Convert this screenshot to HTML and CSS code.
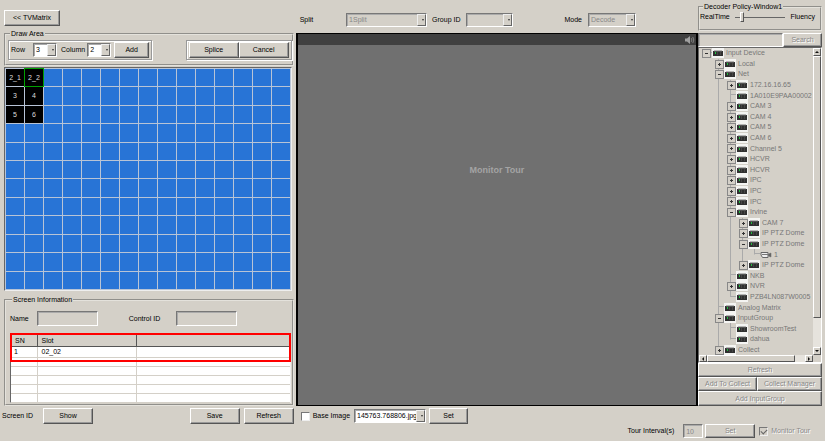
FILE: index.html
```html
<!DOCTYPE html>
<html lang="en">
<head>
  <meta charset="UTF-8" />
  <meta name="viewport" content="width=device-width, initial-scale=1.0" />
  <title>TVMatrix</title>
  <link rel="stylesheet" href="styles.css">
</head>
<body>
  <div class="app">
    <div class="left">
      <button class="btn back">&lt;&lt; TVMatrix</button>

      <fieldset class="group draw-area">
        <legend>Draw Area</legend>
        <div class="draw-row">
          <div class="box">
            <label for="row">Row</label>
            <span class="select small"><select id="row"><option>3</option></select></span>
            <label for="column">Column</label>
            <span class="select small column"><select id="column"><option>2</option></select></span>
            <button class="btn add">Add</button>
          </div>
          <div class="box">
            <button class="btn">Splice</button>
            <button class="btn">Cancel</button>
          </div>
        </div>
      </fieldset>

      <div class="matrix" id="matrix"></div>

      <fieldset class="group screen-info">
        <legend>Screen Information</legend>
        <div class="fields">
          <label for="name">Name</label>
          <input type="text" id="name" disabled />
          <label for="control">Control ID</label>
          <input type="text" id="control" class="control" disabled />
        </div>
        <div class="slots">
          <table>
            <thead>
              <tr><th class="sn">SN</th><th class="slot">Slot</th><th></th></tr>
            </thead>
            <tbody>
              <tr class="first"><td>1</td><td>02_02</td><td></td></tr>
              <tr><td></td><td></td><td></td></tr>
              <tr><td></td><td></td><td></td></tr>
              <tr><td></td><td></td><td></td></tr>
              <tr><td></td><td></td><td></td></tr>
              <tr><td></td><td></td><td></td></tr>
            </tbody>
          </table>
          <div class="highlight"></div>
        </div>
      </fieldset>

      <div class="screen-actions">
        <span class="screen-id">Screen ID</span>
        <button class="btn">Show</button>
        <button class="btn save">Save</button>
        <button class="btn">Refresh</button>
      </div>
    </div>

    <div class="right">
      <div class="panels">
        <div class="center">
          <div class="options">
            <label for="split">Split</label>
            <span class="select split"><select id="split" disabled><option>1Split</option></select></span>
            <label for="group">Group ID</label>
            <span class="select group-id"><select id="group" disabled><option></option></select></span>
            <label for="mode" class="mode-label">Mode</label>
            <span class="select mode"><select id="mode" disabled><option>Decode</option></select></span>
          </div>
          <div class="video">
            <div class="video-bar">
              <svg width="10" height="8" viewBox="0 0 10 8">
                <path d="M0 2.5h2L5 0v8L2 5.5H0z" fill="#a0a0a0" />
                <path d="M6.3 2.2q1.2 1.8 0 3.6M7.8 1q2 3 0 6" fill="none" stroke="#909090" stroke-width=".8" />
              </svg>
            </div>
            <div class="tour">Monitor Tour</div>
          </div>
        </div>

        <div class="side">
          <fieldset class="group policy">
            <legend>Decoder Policy-Window1</legend>
            <div class="slider">
              <label for="policy">RealTime</label>
              <input type="range" id="policy" min="0" max="10" value="1" />
              <span>Fluency</span>
            </div>
          </fieldset>
          <div class="search">
            <input type="text" aria-label="Search" disabled />
            <button class="btn" disabled>Search</button>
          </div>
          <div class="tree-box">
            <ul class="tree" id="tree"></ul>
            <div class="scroll vertical">
              <button class="arrow up" aria-label="Up"></button>
              <div class="thumb"></div>
              <div class="track"></div>
              <button class="arrow down" aria-label="Down"></button>
            </div>
            <div class="scroll horizontal">
              <button class="arrow prev" aria-label="Left"></button>
              <div class="thumb"></div>
              <div class="track"></div>
              <button class="arrow next" aria-label="Right"></button>
            </div>
          </div>
          <div class="side-actions">
            <button class="btn wide" disabled>Refresh</button>
            <button class="btn" disabled>Add To Collect</button>
            <button class="btn" disabled>Collect Manager</button>
            <button class="btn wide" disabled>Add InputGroup</button>
          </div>
        </div>
      </div>

      <div class="base-image">
        <input type="checkbox" id="base" />
        <label for="base">Base Image</label>
        <span class="select file"><select aria-label="Image file"><option>145763.768806.jpg</option></select></span>
        <button class="btn">Set</button>
      </div>
      <div class="interval">
        <label for="interval">Tour Interval(s)</label>
        <input type="text" id="interval" value="10" disabled />
        <button class="btn" disabled>Set</button>
        <input type="checkbox" id="monitor" checked disabled />
        <label for="monitor" class="off">Monitor Tour</label>
      </div>
    </div>
  </div>

  <script>
    // screens already placed on the 15 x 12 matrix
    const screens = { 0: "2_1", 1: "2_2", 15: "3", 16: "4", 30: "5", 31: "6" };
    const matrix = document.getElementById("matrix");

    for (let i = 0; i < 180; i++) {
      const cell = document.createElement("div");
      cell.className = "cell";
      if (screens[i]) {
        cell.classList.add("used");
        cell.textContent = screens[i];
      }
      if (i === 1) cell.classList.add("selected");
      matrix.appendChild(cell);
    }

    // level, node type, label
    const nodes = [
      [0, "minus root", "Input Device"],
      [1, "plus", "Local"],
      [1, "minus", "Net"],
      [2, "plus", "172.16.16.65"],
      [2, "leaf", "1A010E9PAA00002"],
      [2, "plus", "CAM 3"],
      [2, "plus", "CAM 4"],
      [2, "plus", "CAM 5"],
      [2, "plus", "CAM 6"],
      [2, "plus", "Channel 5"],
      [2, "plus", "HCVR"],
      [2, "plus", "HCVR"],
      [2, "plus", "IPC"],
      [2, "plus", "IPC"],
      [2, "plus", "IPC"],
      [2, "minus", "Irvine"],
      [3, "plus", "CAM 7"],
      [3, "plus", "IP PTZ Dome"],
      [3, "minus", "IP PTZ Dome"],
      [4, "leaf last", "1"],
      [3, "plus last", "IP PTZ Dome"],
      [2, "leaf", "NKB"],
      [2, "plus", "NVR"],
      [2, "leaf last", "PZB4LN087W0005"],
      [1, "leaf", "Analog Matrix"],
      [1, "minus", "InputGroup"],
      [2, "leaf", "ShowroomTest"],
      [2, "leaf last", "dahua"],
      [1, "plus", "Collect"]
    ];

    const device = '<svg class="icon" width="12" height="10" viewBox="0 0 12 10">' +
      '<rect width="12" height="10" fill="#f4f4f2"/><rect x="1" y="3" width="10" height="5" fill="#303030"/>' +
      '<path d="M2 3h8" stroke="#777"/><path d="M5.5 4v3M8.5 4v3" stroke="#555" stroke-width=".6"/>' +
      '<rect x="3" y="4" width="1" height="2" fill="#20c040"/></svg>';
    const camera = '<svg class="icon" width="12" height="10" viewBox="0 0 12 10">' +
      '<path d="M1 2.5h7v5H2.5L1 5z" fill="#eee" stroke="#666"/><path d="M2 4.5h6" stroke="#777"/>' +
      '<path d="M8.5 4l2.5-1v4L8.5 6z" fill="#666" stroke="#666" stroke-width=".5"/></svg>';

    document.getElementById("tree").innerHTML = nodes.map(([level, type, label]) => {
      let guides = "";
      for (let i = 0; i < level; i++) {
        guides += `<span class="guide ${i ? "line" : ""}"></span>`;
      }
      return `<li>${guides}<span class="guide line node ${type}"></span>` +
        `${level === 4 ? camera : device}<span class="text">${label}</span></li>`;
    }).join("");
  </script>
</body>
</html>
```
FILE: styles.css
```css
* {
  box-sizing: border-box;
}

body {
  margin: 0;
  background: #d4d0c8;
  color: #000;
  font-family: "Liberation Sans", Arial, sans-serif;
  font-size: 7px;
  line-height: 10px;
}

button,
input,
select {
  font: inherit;
  color: inherit;
  margin: 0;
  padding: 0;
  border-radius: 0;
}

label,
span,
legend {
  white-space: nowrap;
}

.app {
  display: flex;
  height: 100vh;
  min-height: 441px;
}

/* shared controls */

.btn {
  height: 16px;
  width: 50px;
  background: #d4d0c8;
  border: 1px solid;
  border-color: #fff #555 #555 #fff;
  box-shadow: inset -1px -1px #999;
  white-space: nowrap;
}

.btn:disabled,
.off {
  color: #888;
  text-shadow: 1px 1px #fff;
}

input[type="text"],
.select select {
  appearance: none;
  background: #fff;
  border: 1px solid;
  border-color: #777 #fff #fff #777;
  box-shadow: inset 1px 1px #aaa;
  outline: none;
}

input[type="text"]:disabled,
.select select:disabled {
  background: #d4d0c8;
  color: #888;
  opacity: 1;
}

.select {
  position: relative;
  display: flex;
  height: 14px;
}

.select select {
  width: 100%;
  padding-left: 2px;
}

.select::before {
  content: "";
  position: absolute;
  right: 1px;
  top: 1px;
  bottom: 1px;
  width: 7px;
  background: #d4d0c8;
  border: 1px solid;
  border-color: #eee #666 #666 #eee;
  pointer-events: none;
}

.select::after {
  content: "";
  position: absolute;
  right: 3px;
  top: 6px;
  border: 1px solid transparent;
  border-top: 2px solid #333;
  pointer-events: none;
}

input[type="checkbox"] {
  appearance: none;
  width: 9px;
  height: 9px;
  background: #fff;
  border: 1px solid;
  border-color: #777 #eee #eee #777;
}

input[type="checkbox"]:disabled {
  background: #d4d0c8;
}

input[type="checkbox"]:checked::after {
  content: "";
  display: block;
  width: 5px;
  height: 3px;
  margin: 1px;
  border: solid #666;
  border-width: 0 0 1px 1px;
  transform: rotate(-45deg);
}

.group {
  margin: 0;
  min-width: 0;
  border: 2px groove #e4e2dc;
}

.group legend {
  height: 8px;
  line-height: 8px;
  padding: 0 1px;
}

/* left column */

.left {
  flex: 0 0 35.6%;
  display: flex;
  flex-direction: column;
  padding: 10px 0 17px 4px;
}

.back {
  width: 56px;
  margin-bottom: 4px;
}

.draw-area {
  height: 36px;
  padding: 2px 0 4px 2px;
  margin-bottom: 1px;
}

.draw-area legend,
.screen-info legend {
  margin-left: 2px;
}

.draw-row {
  display: flex;
  justify-content: space-between;
}

.box {
  display: flex;
  align-items: center;
  height: 20px;
  border: 1px solid #999;
  box-shadow: inset 1px 1px #fff, 1px 1px #fff;
  padding: 0 2px;
}

.box .small {
  width: 24px;
  margin: 0 4px 0 8px;
}

.box .column {
  margin: 0 3px 0 2px;
}

.box .add {
  width: 35px;
}

.matrix {
  flex: 1;
  display: grid;
  grid-template-columns: repeat(15, 1fr);
  grid-template-rows: repeat(12, 1fr);
  gap: 1px;
  margin: 0 2px 5px 0;
  padding: 1px;
  background: #b8c4d6;
  border: 1px solid;
  border-color: #666 #eee #eee #666;
}

.cell {
  display: flex;
  align-items: center;
  justify-content: center;
  min-width: 0;
  min-height: 0;
  background: #2874d6;
}

.cell.used {
  background: #000;
  color: #ddd;
}

.cell.selected {
  outline: 1px solid #00a000;
}

.screen-info {
  padding: 7px 1px 1px 4px;
  margin-bottom: 2px;
}

.fields {
  display: flex;
  align-items: center;
  margin-bottom: 8px;
}

.fields input {
  width: 61px;
  height: 15px;
  margin: 0 31px 0 8px;
}

.fields .control {
  margin: 0 0 0 16px;
}

.slots {
  position: relative;
  height: 69px;
  background: #fff;
  border: 1px solid;
  border-color: #666 #eee #eee #666;
}

.slots table {
  width: 100%;
  border-collapse: collapse;
  table-layout: fixed;
}

.slots th {
  height: 11px;
  padding: 0 4px;
  background: #d4d0c8;
  border-right: 1px solid #555;
  border-bottom: 1px solid #555;
  font-weight: normal;
  text-align: left;
  line-height: 9px;
}

.slots th:last-child {
  border-right: 0;
}

.slots .sn {
  width: 26px;
}

.slots .slot {
  width: 99px;
}

.slots td {
  height: 9px;
  padding: 0 3px;
  border: solid #d4d0c8;
  border-width: 0 1px 1px 0;
  line-height: 9px;
}

.slots td:nth-child(2) {
  padding-left: 4px;
}

.slots td:last-child {
  border-right: 0;
}

.slots .first td {
  height: 11px;
}

.highlight {
  position: absolute;
  left: -1px;
  right: -1px;
  top: -2px;
  height: 29px;
  border: 2px solid #f00;
}

.screen-actions {
  display: flex;
  align-items: center;
  margin-left: -2px;
}

.screen-id {
  width: 41px;
}

.save {
  margin: 0 4px 0 auto;
}

/* right part: video, device tree and tour settings */

.right {
  flex: 1;
  min-width: 0;
  display: flex;
  flex-direction: column;
  padding: 0 3px 3px 2px;
}

.panels {
  flex: 1;
  min-height: 0;
  display: flex;
}

.center {
  flex: 1;
  display: flex;
  flex-direction: column;
}

.options {
  display: flex;
  align-items: center;
  height: 33px;
  padding: 6px 62px 0 4px;
}

.split {
  width: 81px;
  margin: 0 5px 0 auto;
}

.group-id {
  width: 47px;
  margin-left: 6px;
}

.mode-label {
  margin-left: 51px;
}

.mode {
  width: 48px;
  margin-left: 6px;
}

.video {
  flex: 1;
  background: #707070;
  border: 1px solid #000;
  border-left-width: 2px;
  border-right-width: 2px;
}

.video-bar {
  display: flex;
  align-items: center;
  justify-content: flex-end;
  height: 11px;
  padding-right: 1px;
  background: #404040;
}

.tour {
  margin-top: 120px;
  text-align: center;
  font-size: 9px;
  font-weight: bold;
  color: #a4a4a4;
}

.side {
  width: 124px;
  min-width: 0;
  flex-shrink: 0;
  display: flex;
  flex-direction: column;
  padding-top: 3px;
}

.policy {
  height: 28px;
  padding: 1px 0 0 0;
  margin-bottom: 2px;
}

.policy legend {
  margin-left: 3px;
}

.slider {
  display: flex;
  align-items: center;
  justify-content: space-between;
  padding-right: 5px;
}

.slider input {
  appearance: none;
  width: 50px;
  height: 10px;
  background: linear-gradient(#666, #666) center / 100% 1px no-repeat;
}

.slider input::-webkit-slider-thumb {
  appearance: none;
  width: 4px;
  height: 10px;
  background: #d4d0c8;
  border: 1px solid;
  border-color: #fff #555 #555 #fff;
}

.search {
  display: flex;
  height: 14px;
}

.search input {
  flex: 1;
  min-width: 0;
}

.search .btn {
  width: 39px;
  height: 14px;
}

.tree-box {
  flex: 1;
  min-height: 0;
  display: grid;
  grid-template-columns: 1fr 8px;
  grid-template-rows: 1fr 7px;
  border: 1px solid;
  border-color: #666 #fff #fff #666;
}

.tree {
  display: flex;
  flex-direction: column;
  min-width: 0;
  min-height: 0;
  margin: 0;
  padding: 0;
  overflow: hidden;
  list-style: none;
  color: #777;
}

.tree li {
  flex: 1;
  min-height: 0;
  display: flex;
  align-items: center;
}

.guide {
  position: relative;
  flex: 0 0 12px;
  align-self: stretch;
}

.guide:first-child {
  flex-basis: 13px;
}

.line {
  background: linear-gradient(#aaa, #aaa) 6px 0 / 1px 100% no-repeat;
}

.node {
  background: linear-gradient(#aaa, #aaa) 6px 0 / 1px 100% no-repeat,
    linear-gradient(#aaa, #aaa) 6px 4px / 7px 1px no-repeat;
}

.node.last {
  background-size: 1px 50%, 7px 1px;
}

.node.root {
  background-size: 0 0, 7px 1px;
}

/* expander square drawn over the guide line */
.plus::before,
.minus::before {
  content: "";
  position: absolute;
  left: 3px;
  top: 1px;
  width: 7px;
  height: 7px;
  border: 1px solid #888;
  background: linear-gradient(#333, #333) center / 3px 1px no-repeat, #d4d0c8;
}

.plus::before {
  background: linear-gradient(#333, #333) center / 3px 1px no-repeat,
    linear-gradient(#333, #333) center / 1px 3px no-repeat, #d4d0c8;
}

.icon {
  flex: none;
  margin-right: 2px;
}

.scroll {
  display: flex;
  background: #e6e3dd;
}

.vertical {
  flex-direction: column;
}

.thumb,
.arrow {
  background: #d4d0c8;
  border: 1px solid;
  border-color: #fff #555 #555 #fff;
}

.thumb {
  flex: 9;
}

.track {
  flex: 1;
}

.arrow {
  display: flex;
  align-items: center;
  justify-content: center;
  flex: 0 0 8px;
}

.arrow::after {
  content: "";
  border: 2px solid transparent;
}

.up::after {
  border-top: 0;
  border-bottom-color: #111;
}

.down::after {
  border-bottom: 0;
  border-top-color: #111;
}

.prev::after {
  border-left: 0;
  border-right-color: #111;
}

.next::after {
  border-right: 0;
  border-left-color: #111;
}

.side-actions {
  display: grid;
  grid-template-columns: 59px 1fr;
}

.side-actions .btn {
  width: auto;
  height: 14px;
}

.side-actions .wide {
  grid-column: span 2;
}

.side-actions .wide:last-child {
  height: 15px;
}

.base-image {
  display: flex;
  align-items: center;
  height: 16px;
  margin-top: 2px;
  padding-left: 5px;
}

.base-image label {
  margin: 0 4px 0 3px;
}

.file {
  width: 72px;
  margin-right: 3px;
}

.base-image .btn {
  width: 39px;
}

.interval {
  display: flex;
  align-items: center;
  justify-content: flex-end;
  height: 14px;
  padding-right: 12px;
}

.interval input[type="text"] {
  width: 20px;
  height: 14px;
  margin: 0 2px 0 9px;
  padding-left: 2px;
}

.interval .btn {
  height: 14px;
  margin-right: 4px;
}

.interval .off {
  margin-left: 3px;
}
```
